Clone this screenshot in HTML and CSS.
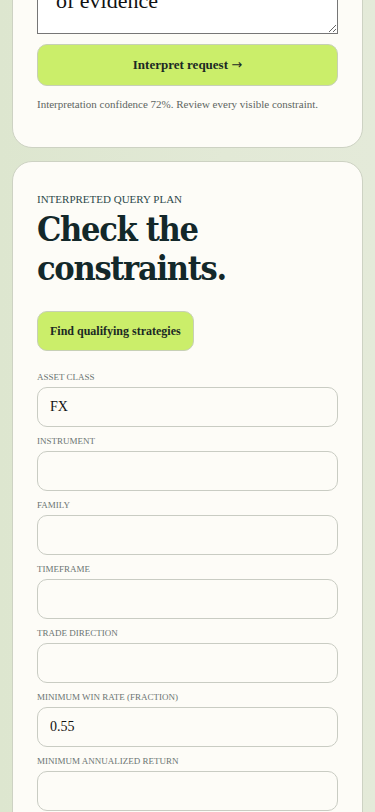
FILE: index.html
```html
<!DOCTYPE html>
<html lang="en">

<head>
    <meta charset="UTF-8">
    <meta name="viewport" content="width=device-width, initial-scale=1.0">
    <title>Strategy finder</title>
    <link rel="stylesheet" href="styles.css">
</head>

<body>
    <div class="page">

        <!-- request card (scrolled past its top) -->
        <section class="card ask">
            <textarea class="request">Show FX strategies
with win rate above
55% and two years
of evidence</textarea>
            <button class="btn wide">Interpret request <span class="arrow">&rarr;</span></button>
            <p class="note">Interpretation confidence 72%. Review every visible constraint.</p>
        </section>

        <!-- query plan -->
        <section class="card plan">
            <p class="eyebrow">Interpreted query plan</p>
            <h1 class="title">Check the constraints.</h1>
            <button class="btn">Find qualifying strategies</button>

            <div class="fields">
                <label class="field">
                    <span>Asset class</span>
                    <input type="text" value="FX">
                </label>
                <label class="field">
                    <span>Instrument</span>
                    <input type="text">
                </label>
                <label class="field">
                    <span>Family</span>
                    <input type="text">
                </label>
                <label class="field">
                    <span>Timeframe</span>
                    <input type="text">
                </label>
                <label class="field">
                    <span>Trade direction</span>
                    <input type="text">
                </label>
                <label class="field">
                    <span>Minimum win rate (fraction)</span>
                    <input type="text" value="0.55">
                </label>
                <label class="field">
                    <span>Minimum annualized return</span>
                    <input type="text">
                </label>
            </div>
        </section>

    </div>
</body>

</html>
```

FILE: styles.css
```css
* {
    padding: 0;
    margin: 0;
    box-sizing: border-box;
}

body {
    background: linear-gradient(90deg, #dde6cf, #e2e9d6 60%, #e4ead9);
    font-family: "Liberation Serif", "Times New Roman", serif;
    color: #1b2a24;
}

.page {
    display: flex;
    flex-direction: column;
    gap: 13px;
    padding: 0 12px 40px;
}

.card {
    background-color: #fdfcf7;
    border: 1px solid #cdd2c3;
    border-radius: 20px;
    padding: 28px 24px;
}

/* the top of this card is above the visible area */
.ask {
    margin-top: -143px;
    border-top-left-radius: 0;
    border-top-right-radius: 0;
    padding-bottom: 37px;
}

.request {
    display: block;
    width: 100%;
    height: 148px;
    padding: 14px 18px 18px;
    font-family: "Liberation Serif", serif;
    font-size: 22px;
    line-height: 1.3;
    color: #111;
    background: #fff;
    border: 1px solid #767676;
    resize: vertical;
}

.btn {
    display: block;
    background-color: #cbee6a;
    border: 1px solid #c7d0b6;
    border-radius: 10px;
    font-family: "Liberation Serif", serif;
    font-weight: bold;
    font-size: 12px;
    color: #1b2a24;
    padding: 0 12px;
    height: 40px;
    cursor: pointer;
}

.wide {
    width: 100%;
    height: 42px;
    margin-top: 10px;
    font-size: 13px;
}

.arrow {
    font-family: "DejaVu Sans", sans-serif;
    font-weight: normal;
}

.note {
    margin-top: 12px;
    font-size: 11px;
    color: #5d6662;
}

.plan {
    padding-top: 31px;
}

.eyebrow {
    text-transform: uppercase;
    font-size: 11px;
    color: #2e4a4b;
}

.title {
    margin-top: 5px;
    font-family: "DejaVu Serif Condensed", "DejaVu Serif", Georgia, serif;
    font-size: 34px;
    line-height: 39px;
    letter-spacing: -1.3px;
    color: #13282a;
}

.plan .btn {
    margin-top: 23px;
}

.fields {
    display: flex;
    flex-direction: column;
    gap: 9px;
    margin-top: 21px;
}

.field {
    display: flex;
    flex-direction: column;
    gap: 4px;
}

.field span {
    text-transform: uppercase;
    font-size: 9px;
    line-height: 11px;
    color: #6b7472;
}

.field input {
    height: 40px;
    width: 100%;
    border: 1px solid #c9ccc3;
    border-radius: 10px;
    background: #fdfcf7;
    padding: 0 12px;
    font-family: "Liberation Serif", serif;
    font-size: 14px;
    color: #111;
}
```
